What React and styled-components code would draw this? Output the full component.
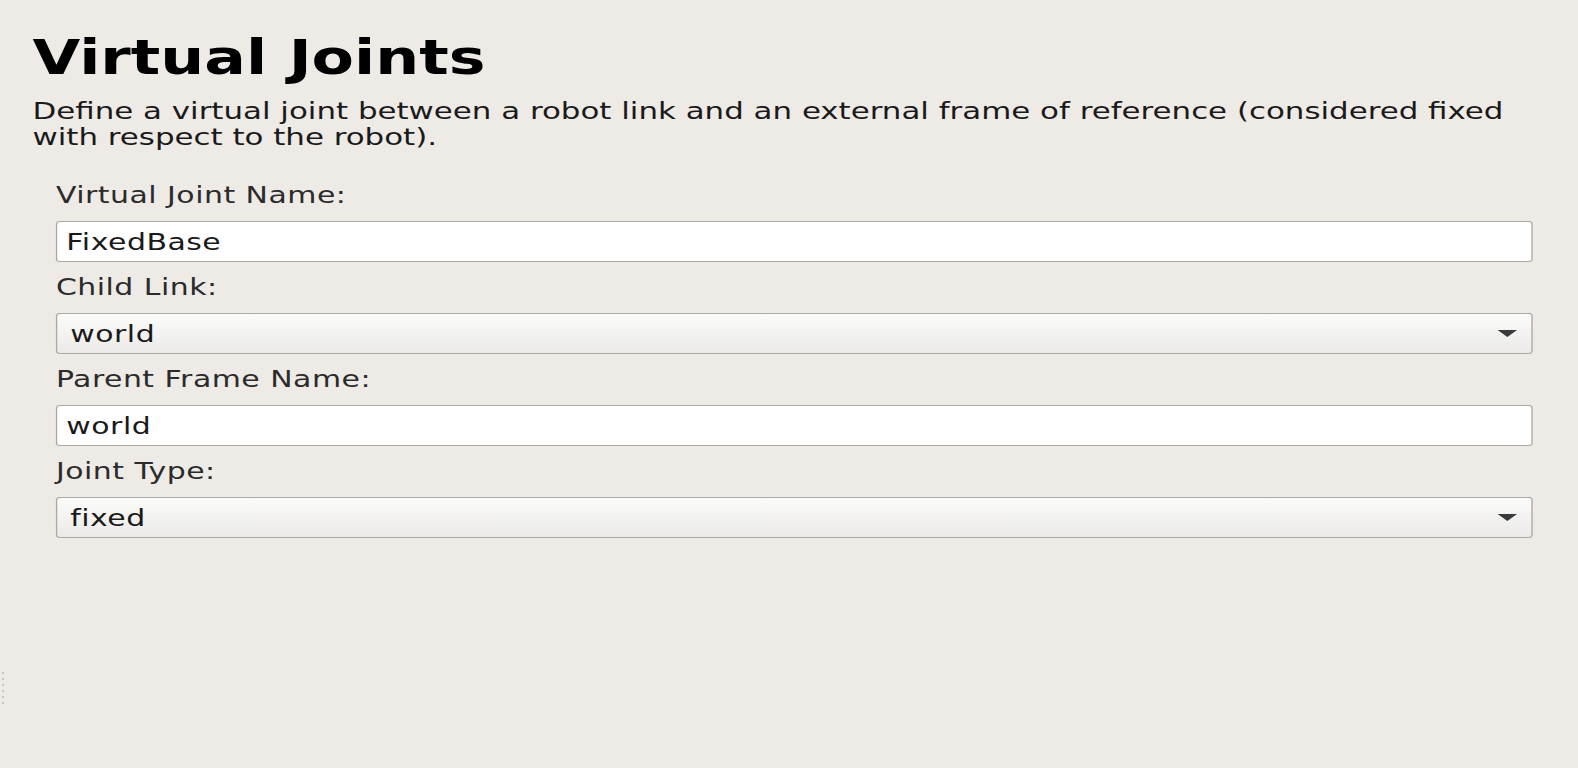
import React from 'react';
import styled, { createGlobalStyle } from 'styled-components';

// the whole screen is stretched sideways in the reference, so the page is
// laid out narrow and widened with one scaleX
const STRETCH = 1.3;

const GlobalStyle = createGlobalStyle`
	html, body {
		margin: 0;
		height: 100%;
		overflow: hidden;
		background: #eeebe7;
	}
`;

const Stage = styled.div`
	position: relative;
	width: ${1578 / STRETCH}px;
	height: 768px;
	box-sizing: border-box;
	padding: 30px 35px 0 25px;
	transform: scaleX(${STRETCH});
	transform-origin: 0 0;
	font-family: "DejaVu Sans", "Liberation Sans", sans-serif;
`;

const Title = styled.h1`
	margin: 0;
	font-size: 47.5px;
	line-height: 56px;
	font-weight: 700;
	color: #000;
`;

const Description = styled.p`
	margin: 12px 0 0;
	font-size: 23.75px;
	line-height: 26px;
	color: #1a1a1a;
`;

const Form = styled.div`
	display: flex;
	flex-direction: column;
	margin-top: 32px;
	padding-left: 18px;
`;

const Label = styled.div`
	font-size: 23px;
	letter-spacing: 0.38px;
	line-height: 26px;
	color: #2b2b2b;
	margin-bottom: 13px;
`;

const TextField = styled.div`
	display: flex;
	align-items: center;
	height: 41px;
	box-sizing: border-box;
	padding: 0 7px;
	margin-bottom: 12px;
	border: 1px solid #aba7a2;
	border-radius: 3px;
	background: #fff;
	font-size: 23px;
	letter-spacing: 0.4px;
	color: #1a1a1a;
`;

const Combo = styled(TextField)`
	justify-content: space-between;
	padding: 0 11px 0 10px;
	background: linear-gradient(#fbfbfa, #ebeae8);
`;

const Arrow = () => (
	<svg width="15" height="7" viewBox="0 0 15 7">
		<path d="M0 0 L15 0 L7.5 7 Z" fill="#3a3a3a" />
	</svg>
);

const Grip = styled.div`
	position: absolute;
	left: 2px;
	top: 672px;
	display: flex;
	flex-direction: column;
	gap: 4px;
`;

const GripDot = styled.span`
	width: 2px;
	height: 2px;
	background: #c9c6c1;
`;

function Field({ label, value, combo }) {
	return (
		<>
			<Label>{label}</Label>
			{combo ? (
				<Combo>
					<span>{value}</span>
					<Arrow />
				</Combo>
			) : (
				<TextField>{value}</TextField>
			)}
		</>
	);
}

export default function App() {
	return (
		<>
			<GlobalStyle />
			<Stage>
				<Title>Virtual Joints</Title>
				<Description>
					Define a virtual joint between a robot link and an external frame of reference (considered fixed with respect to the robot).
				</Description>
				<Form>
					<Field label="Virtual Joint Name:" value="FixedBase" />
					<Field label="Child Link:" value="world" combo />
					<Field label="Parent Frame Name:" value="world" />
					<Field label="Joint Type:" value="fixed" combo />
				</Form>
			</Stage>
			<Grip>
				{[0, 1, 2, 3, 4, 5].map(i => <GripDot key={i} />)}
			</Grip>
		</>
	);
}
